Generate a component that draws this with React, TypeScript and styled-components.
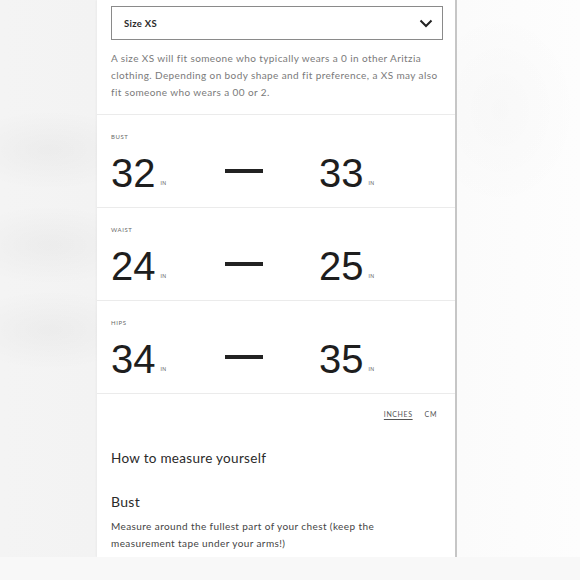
import React from "react";
import styled, { createGlobalStyle } from "styled-components";

const Global = createGlobalStyle`
  html, body { margin: 0; padding: 0; }
  body { font-family: "Lato", "Liberation Sans", sans-serif; }
`;

const Page = styled.div`
  width: 580px;
  height: 580px;
  display: flex;
  flex-direction: column;
  overflow: hidden;
  background: #f7f7f7;
`;

const Stage = styled.div`
  height: 557px;
  display: flex;
  padding-left: 97px;
  background:
    radial-gradient(ellipse 90px 40px at 50px 150px, rgba(0,0,0,0.03), transparent),
    radial-gradient(ellipse 90px 40px at 50px 245px, rgba(0,0,0,0.03), transparent),
    radial-gradient(ellipse 90px 40px at 50px 330px, rgba(0,0,0,0.03), transparent),
    radial-gradient(ellipse 80px 100px at 500px 110px, rgba(0,0,0,0.015), transparent),
    linear-gradient(90deg, #f4f4f4 0, #f3f3f3 95px, #fbfbfb 460px, #fdfdfd 580px);
`;

const Panel = styled.div`
  width: 358px;
  background: #ffffff;
  border-right: 2px solid #c6c6c6;
  box-shadow: -1px 0 2px rgba(0, 0, 0, 0.04);
  display: flex;
  flex-direction: column;
  overflow: hidden;
`;

const BottomBand = styled.div`
  height: 23px;
  background: #f8f8f8;
`;

const Top = styled.div`
  padding: 6px 12px 13px 14px;
`;

const Select = styled.div`
  height: 34px;
  box-sizing: border-box;
  border: 1px solid #8a8a8a;
  display: flex;
  align-items: center;
  justify-content: space-between;
  padding: 0 9px 0 12px;
  color: #2a2a2a;
  font-size: 9.5px;
  letter-spacing: 0.3px;
  font-weight: 700;
`;

const Description = styled.p`
  margin: 10px 0 0;
  font-size: 10px;
  line-height: 17px;
  letter-spacing: 0.4px;
  color: #7a7a7a;
`;

const Row = styled.section`
  border-top: 1px solid #ebebeb;
  padding: 18px 14px 14px;
`;

const Label = styled.div`
  font-size: 6px;
  line-height: 8px;
  letter-spacing: 0.6px;
  color: #6a6a6a;
  text-transform: uppercase;
`;

const Values = styled.div`
  margin-top: 12px;
  display: grid;
  grid-template-columns: 114px 38px 1fr;
  align-items: center;
`;

const Value = styled.div<{ $offset?: number }>`
  font-family: "Liberation Sans", Arial, sans-serif;
  font-size: 40px;
  line-height: 40px;
  height: 40px;
  color: #1e1e1e;
  padding-left: ${(p) => p.$offset ?? 0}px;
  white-space: nowrap;
`;

const Unit = styled.span`
  font-family: "Lato", sans-serif;
  font-size: 5px;
  line-height: 0;
  letter-spacing: 0.4px;
  color: #555;
  margin-left: 5px;
  vertical-align: 2px;
`;

const Dash = styled.div`
  height: 3.5px;
  background: #222;
  margin-bottom: 4px;
`;

const Units = styled.div`
  border-top: 1px solid #ebebeb;
  display: flex;
  justify-content: flex-end;
  gap: 12px;
  padding: 15px 18px 0 0;
  font-size: 7px;
  line-height: 10px;
  letter-spacing: 0.6px;
  color: #555;
`;

const UnitOption = styled.span<{ $active?: boolean }>`
  text-decoration: ${(p) => (p.$active ? "underline" : "none")};
  text-underline-offset: 1.5px;
`;

const Guide = styled.div`
  padding: 30px 14px 0;
`;

const GuideTitle = styled.h2`
  margin: 0;
  font-size: 13.5px;
  line-height: 18px;
  letter-spacing: 0.3px;
  font-weight: 400;
  color: #2a2a2a;
`;

const SubTitle = styled.h3`
  margin: 26px 0 0;
  font-size: 14px;
  line-height: 18px;
  letter-spacing: 0.3px;
  font-weight: 400;
  color: #2a2a2a;
`;

const GuideText = styled.p`
  margin: 7px 0 0;
  font-size: 10px;
  line-height: 17px;
  letter-spacing: 0.4px;
  color: #444;
`;

const Chevron = () => (
  <svg width="14" height="9" viewBox="0 0 14 9" fill="none">
    <path d="M1.5 1.5 L7 7 L12.5 1.5" stroke="#222" strokeWidth="2" />
  </svg>
);

const rows = [
  { label: "Bust", from: 32, to: 33 },
  { label: "Waist", from: 24, to: 25 },
  { label: "Hips", from: 34, to: 35 },
];

export default function App() {
  return (
    <Page>
      <Global />
      <Stage>
        <Panel>
          <Top>
            <Select>
              <span>Size XS</span>
              <Chevron />
            </Select>
            <Description>
              A size XS will fit someone who typically wears a 0 in other Aritzia
              clothing. Depending on body shape and fit preference, a XS may also
              fit someone who wears a 00 or 2.
            </Description>
          </Top>
          {rows.map((r) => (
            <Row key={r.label}>
              <Label>{r.label}</Label>
              <Values>
                <Value>
                  {r.from}
                  <Unit>IN</Unit>
                </Value>
                <Dash />
                <Value $offset={56}>
                  {r.to}
                  <Unit>IN</Unit>
                </Value>
              </Values>
            </Row>
          ))}
          <Units>
            <UnitOption $active>INCHES</UnitOption>
            <UnitOption>CM</UnitOption>
          </Units>
          <Guide>
            <GuideTitle>How to measure yourself</GuideTitle>
            <SubTitle>Bust</SubTitle>
            <GuideText>
              Measure around the fullest part of your chest (keep the
              <br />
              measurement tape under your arms!)
            </GuideText>
          </Guide>
        </Panel>
      </Stage>
      <BottomBand />
    </Page>
  );
}
